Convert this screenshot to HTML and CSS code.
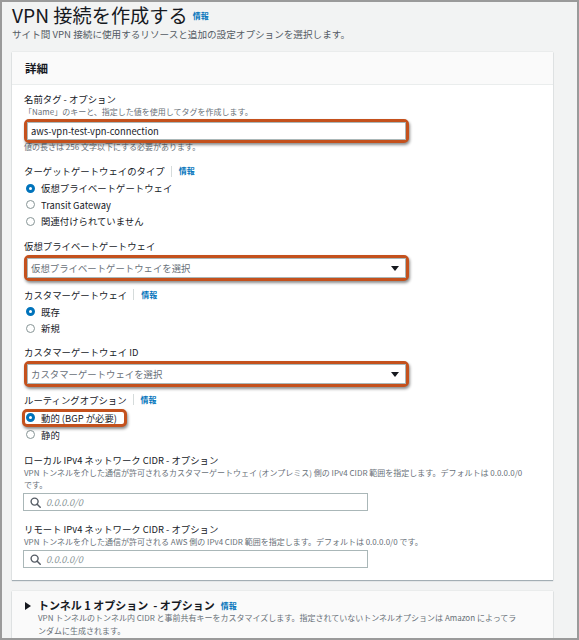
FILE: index.html
```html
<!DOCTYPE html>
<html lang="ja">
<head>
    <meta charset="UTF-8">
    <title>VPN 接続を作成する</title>
    <link rel="stylesheet" href="styles.css">
</head>
<body>
<div class="frame">
    <h1 class="title">VPN 接続を作成する <a class="info" href="#">情報</a></h1>
    <p class="subtitle">サイト間 VPN 接続に使用するリソースと追加の設定オプションを選択します。</p>

    <section class="panel">
        <div class="panel-head">詳細</div>
        <div class="panel-body">

            <div class="label first">名前タグ - オプション</div>
            <div class="desc">「Name」のキーと、指定した値を使用してタグを作成します。</div>
            <div class="mark mark-input">
                <div class="input">aws-vpn-test-vpn-connection</div>
            </div>
            <div class="desc constraint">値の長さは 256 文字以下にする必要があります。</div>

            <div class="label gap11">ターゲットゲートウェイのタイプ<span class="sep"></span><a class="info" href="#">情報</a></div>
            <div class="radios">
                <div class="radio on">仮想プライベートゲートウェイ</div>
                <div class="radio">Transit Gateway</div>
                <div class="radio">関連付けられていません</div>
            </div>

            <div class="label gap9">仮想プライベートゲートウェイ</div>
            <div class="mark mark-select">
                <div class="select">仮想プライベートゲートウェイを選択<span class="caret"></span></div>
            </div>

            <div class="label gap7">カスタマーゲートウェイ<span class="sep"></span><a class="info" href="#">情報</a></div>
            <div class="radios">
                <div class="radio on">既存</div>
                <div class="radio">新規</div>
            </div>

            <div class="label gap8">カスタマーゲートウェイ ID</div>
            <div class="mark mark-select">
                <div class="select">カスタマーゲートウェイを選択<span class="caret"></span></div>
            </div>

            <div class="label gap6">ルーティングオプション<span class="sep"></span><a class="info" href="#">情報</a></div>
            <div class="mark mark-radio">
                <div class="radio on">動的 (BGP が必要)</div>
            </div>
            <div class="radio">静的</div>

            <div class="label gap10">ローカル IPv4 ネットワーク CIDR - オプション</div>
            <div class="desc wide">VPN トンネルを介した通信が許可されるカスタマーゲートウェイ (オンプレミス) 側の IPv4 CIDR 範囲を指定します。デフォルトは 0.0.0.0/0 です。</div>
            <div class="search">
                <svg width="11" height="11" viewBox="0 0 11 11"><circle cx="4.6" cy="4.6" r="3.5" fill="none" stroke="#545b64" stroke-width="1.4"/><path d="M7.2 7.2 10.2 10.2" stroke="#545b64" stroke-width="1.5" stroke-linecap="round"/></svg>
                <span class="placeholder">0.0.0.0/0</span>
            </div>

            <div class="label gap11">リモート IPv4 ネットワーク CIDR - オプション</div>
            <div class="desc">VPN トンネルを介した通信が許可される AWS 側の IPv4 CIDR 範囲を指定します。デフォルトは 0.0.0.0/0 です。</div>
            <div class="search">
                <svg width="11" height="11" viewBox="0 0 11 11"><circle cx="4.6" cy="4.6" r="3.5" fill="none" stroke="#545b64" stroke-width="1.4"/><path d="M7.2 7.2 10.2 10.2" stroke="#545b64" stroke-width="1.5" stroke-linecap="round"/></svg>
                <span class="placeholder">0.0.0.0/0</span>
            </div>
        </div>
    </section>

    <section class="panel collapsed">
        <div class="expander">
            <span class="arrow"></span>
            <span class="exp-title">トンネル 1 オプション&nbsp; - オプション</span>
            <a class="info" href="#">情報</a>
        </div>
        <div class="desc exp-desc">VPN トンネルのトンネル内 CIDR と事前共有キーをカスタマイズします。指定されていないトンネルオプションは Amazon によってランダムに生成されます。</div>
    </section>
</div>
</body>
</html>
```

FILE: styles.css
```css
html, body { margin: 0; padding: 0; }
body { font-family: "Noto Sans CJK JP", "Noto Sans", sans-serif; color: #16191f; background: #fff; }
a { text-decoration: none; }

.frame { box-sizing: border-box; width: 579px; height: 640px; overflow: hidden; border: 2px solid #9a9a9a; background: #f2f3f3; padding: 3px 0 0 10px; }

.title { display: flex; align-items: center; margin: 0; height: 20px; font-size: 19.2px; font-weight: 400; line-height: 20px; white-space: nowrap; }
.title .info { margin-left: 5px; padding-top: 2px; }
.subtitle { margin: 3px 0 0; font-size: 9.6px; line-height: 12px; color: #545b64; white-space: nowrap; }

.info { color: #0073bb; font-weight: 700; font-size: 8px; line-height: 1; }
.sep { display: inline-block; width: 1px; height: 11px; background: #d5dbdb; margin: 0 7px 0 6px; }

.panel { width: 541px; background: #fff; box-shadow: 0 1px 1px rgba(0, 31, 51, .3), 0 0 1px rgba(0, 31, 51, .2); margin-top: 12px; }
.panel-head { height: 32px; line-height: 32px; padding-left: 13px; background: #fafafa; border-bottom: 1px solid #eaeded; font-size: 11.5px; font-weight: 700; }
.panel-body { padding: 0 13px 12px 12px; }

.label { display: flex; align-items: center; height: 14px; font-size: 9.4px; line-height: 14px; white-space: nowrap; }
.label.first { margin-top: 7px; }
.gap6 { margin-top: 6px; }
.gap7 { margin-top: 7px; }
.gap8 { margin-top: 8px; }
.gap9 { margin-top: 9px; }
.gap10 { margin-top: 10px; }
.gap11 { margin-top: 11px; }

.desc { font-size: 8px; line-height: 12px; color: #687078; }
.desc.wide { width: 514px; word-break: keep-all; }
.constraint { margin-top: -2px; }

/* orange annotation boxes drawn round the chosen controls */
.mark { position: relative; z-index: 1; box-sizing: border-box; border: 3px solid #c4511d; border-radius: 5px; box-shadow: 1px 2px 3px rgba(0, 0, 0, .45); background: #fff; }
.mark-input { width: 385px; height: 24px; margin-top: 1px; }
.mark-select { width: 385px; height: 26px; margin-top: 2px; }
.mark-radio { width: 105px; height: 18px; margin: 2px 0 0 -2px; }

.input { box-sizing: border-box; height: 18px; line-height: 16px; padding-left: 3px; border: 1px solid #aab7b8; font-size: 9.4px; color: #16191f; }
.select { position: relative; box-sizing: border-box; height: 20px; line-height: 18px; padding-left: 3px; border: 1px solid #aab7b8; font-size: 9.4px; color: #687078; }
.caret { position: absolute; right: 6px; top: 7px; border-left: 4px solid transparent; border-right: 4px solid transparent; border-top: 5px solid #16191f; }

.radios { margin-top: 2px; }
.radio { display: flex; align-items: center; height: 16.5px; font-size: 9.4px; line-height: 12px; white-space: nowrap; }
.radio::before { content: ""; flex: none; box-sizing: border-box; width: 9px; height: 9px; border-radius: 50%; border: 1px solid #879596; margin: 0 6px 0 2px; background: #fff; }
.radio.on::before { border: 3px solid #0073bb; }
.mark-radio .radio { height: 12px; }
.mark-radio .radio::before { margin-left: 1px; }

.search { box-sizing: border-box; display: flex; align-items: center; width: 345px; height: 18px; margin: 2px 0 0 -1px; border: 1px solid #aab7b8; padding-left: 6px; }
.search svg { margin-right: 5px; }
.placeholder { font-size: 9.2px; font-style: italic; color: #879596; }

.panel.collapsed { background: #fafafa; margin-top: 11px; padding: 7px 13px 0 13px; height: 60px; box-sizing: border-box; }
.expander { display: flex; align-items: center; height: 15px; white-space: nowrap; }
.arrow { width: 0; height: 0; border-top: 4px solid transparent; border-bottom: 4px solid transparent; border-left: 6px solid #16191f; margin-right: 7px; }
.exp-title { font-size: 11px; font-weight: 700; margin-right: 6px; line-height: 15px; }
.exp-desc { padding-left: 13px; width: 482px; line-height: 12.5px; margin-top: -1px; }
```
